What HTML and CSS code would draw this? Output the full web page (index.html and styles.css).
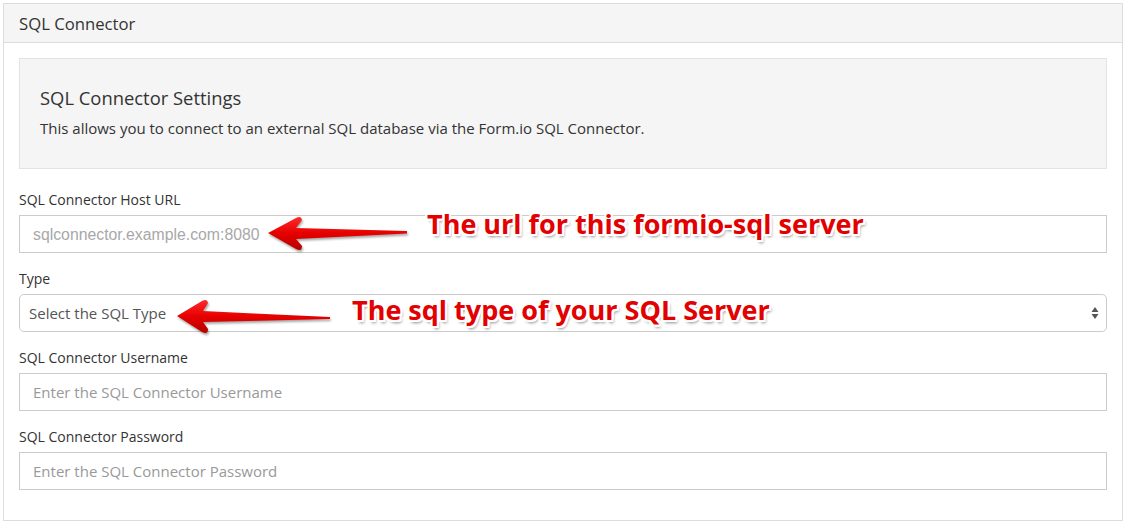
FILE: index.html
```html
<!DOCTYPE html>
<html>
<head>
<meta charset="utf-8">
<link rel="stylesheet" href="styles.css">
</head>
<body>
<div class="panel">
  <div class="panel-heading">SQL Connector</div>
  <div class="panel-body">
    <div class="well">
      <h3 class="well-title">SQL Connector Settings</h3>
      <p class="well-text">This allows you to connect to an external SQL database via the Form.io SQL Connector.</p>
    </div>
    <div class="form-group">
      <label class="control-label">SQL Connector Host URL</label>
      <div class="field">
        <input class="form-control url-input" type="text" placeholder="sqlconnector.example.com:8080">
        <svg class="arrow arrow-url" width="142" height="38" viewBox="0 0 142 38">
          <defs>
            <linearGradient id="ag1" x1="0" y1="0" x2="0" y2="1">
              <stop offset="0" stop-color="#ff2a2a"/>
              <stop offset="0.5" stop-color="#e60000"/>
              <stop offset="1" stop-color="#b80000"/>
            </linearGradient>
          </defs>
          <path d="M1 18 L29 3 Q34 0 35 5 L29 13 L140 16 L140 18.5 L29 24 L35 31 Q35 37 29 34 Z" fill="url(#ag1)"/>
        </svg>
        <span class="note note-url">The url for this formio-sql server</span>
      </div>
    </div>
    <div class="form-group">
      <label class="control-label">Type</label>
      <div class="field">
        <select class="form-control select-control">
          <option>Select the SQL Type</option>
        </select>
        <svg class="select-caret" width="8" height="14" viewBox="0 0 8 14">
          <path d="M4 1 L7.5 6 L0.5 6 Z M4 13 L7.5 8 L0.5 8 Z" fill="#555"/>
        </svg>
        <svg class="arrow arrow-type" width="156" height="38" viewBox="0 0 156 38">
          <defs>
            <linearGradient id="ag2" x1="0" y1="0" x2="0" y2="1">
              <stop offset="0" stop-color="#ff2a2a"/>
              <stop offset="0.5" stop-color="#e60000"/>
              <stop offset="1" stop-color="#b80000"/>
            </linearGradient>
          </defs>
          <path d="M1 18 L26 3 Q31 0 32 5 L27 13 L154 19 L154 21 L27 24 L32 31 Q32 37 26 34 Z" fill="url(#ag2)"/>
        </svg>
        <span class="note note-type">The sql type of your SQL Server</span>
      </div>
    </div>
    <div class="form-group">
      <label class="control-label">SQL Connector Username</label>
      <div class="field">
        <input class="form-control" type="text" placeholder="Enter the SQL Connector Username">
      </div>
    </div>
    <div class="form-group">
      <label class="control-label">SQL Connector Password</label>
      <div class="field">
        <input class="form-control" type="password" placeholder="Enter the SQL Connector Password">
      </div>
    </div>
  </div>
</div>
</body>
</html>
```
FILE: styles.css
```css
* { box-sizing: border-box; }
html, body { margin: 0; padding: 0; background: #fff; }
body {
  padding: 3px 3px 0 3px;
  font-family: "Open Sans", "Liberation Sans", sans-serif;
  font-size: 14px;
  color: #333;
}
.panel {
  border: 1px solid #dddddd;
  width: 1120px;
  background: #fff;
}
.panel-heading {
  background: #f5f5f5;
  border-bottom: 1px solid #dddddd;
  height: 39px;
  padding: 0 15px;
  display: flex;
  align-items: center;
  font-size: 16.7px;
  color: #333;
}
.panel-body {
  padding: 15px 15px 15px 15px;
}
.well {
  background: #f5f5f5;
  border: 1px solid #e3e3e3;
  height: 111px;
  padding: 27px 19px 0 20px;
  margin-bottom: 20px;
}
.well-title {
  margin: 0 0 8px 0;
  font-size: 18.4px;
  font-weight: 400;
  line-height: 24px;
  color: #333;
}
.well-text {
  margin: 0;
  font-size: 15px;
  line-height: 20px;
  color: #333;
}
.form-group { margin-bottom: 15px; }
.control-label {
  display: block;
  height: 21px;
  line-height: 21px;
  margin-bottom: 5px;
  font-size: 14px;
  color: #333;
}
.field { position: relative; }
.form-control {
  display: block;
  width: 100%;
  height: 38px;
  border: 1px solid #cccccc;
  border-radius: 0;
  background: #fff;
  padding: 0 13px;
  font-family: "Open Sans", "Liberation Sans", sans-serif;
  font-size: 15px;
  color: #555;
  outline: none;
}
.form-control::placeholder { color: #999; }
.url-input::placeholder {
  font-family: "Liberation Sans", Arial, sans-serif;
  font-size: 15.8px;
  color: #a8a8a8;
}
.select-control {
  appearance: none;
  -webkit-appearance: none;
  border-radius: 5px;
  padding: 0 9px;
  color: #555;
}
.select-caret {
  position: absolute;
  right: 8px;
  top: 12px;
  pointer-events: none;
}
.arrow {
  position: absolute;
  filter: drop-shadow(1px 2px 1px rgba(0,0,0,0.35));
  pointer-events: none;
}
.arrow-url { left: 248px; top: 0px; }
.arrow-type { left: 157px; top: 4px; }
.note {
  position: absolute;
  font-family: "Open Sans", "Liberation Sans", sans-serif;
  font-weight: 700;
  font-size: 27px;
  line-height: 1;
  color: #e20000;
  white-space: nowrap;
  text-shadow:
    -2px 0 0 #fff, 2px 0 0 #fff, 0 -2px 0 #fff, 0 2px 0 #fff,
    -2px -2px 0 #fff, 2px 2px 0 #fff, -2px 2px 0 #fff, 2px -2px 0 #fff,
    2px 3px 3px rgba(0,0,0,0.45);
  pointer-events: none;
}
.note-url { left: 408px; top: -5px; }
.note-type { left: 333px; top: 2px; }
```
